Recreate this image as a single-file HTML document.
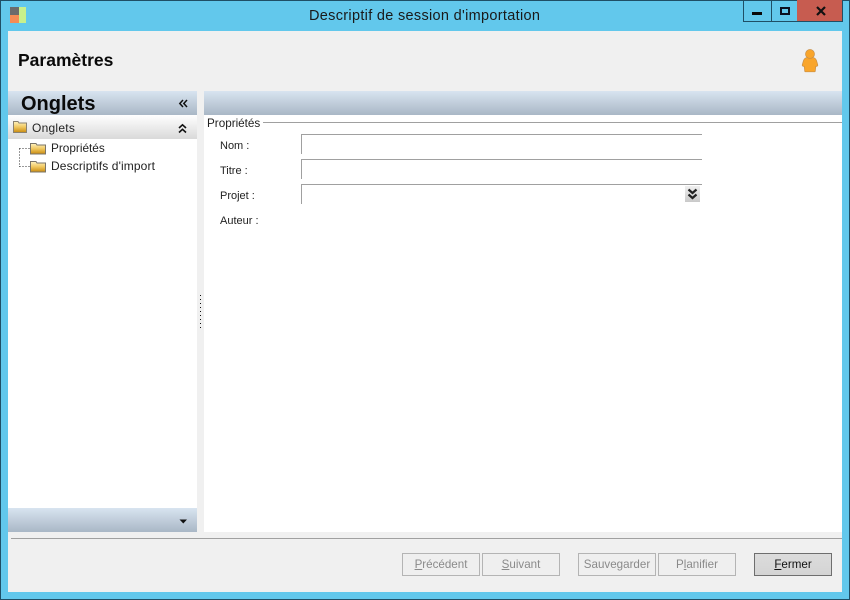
<!DOCTYPE html>
<html lang="fr"><head><meta charset="utf-8"><title>Descriptif de session d'importation</title>
<style>
html,body{margin:0;padding:0;width:850px;height:600px;overflow:hidden;background:#62c8ec}
body{position:relative;font-family:"Liberation Sans",sans-serif;color:#111}
div,svg{position:absolute}
.t{white-space:nowrap;font-size:12px;line-height:14px}
.l{font-size:11px;color:#222;left:220px}
.hd{background:linear-gradient(#d8e4f0,#a9b7c6)}
.btn{top:553px;width:76px;height:21px;border:1px solid #b4b4b4;background:#efefef;text-align:center;font-size:11.600px;line-height:22px;color:#8a8a8a}
.line{height:1px;background:#a0a0a0}
.v{width:1px;background:#a0a0a0}
</style></head><body>
<div style="left:0;top:0;width:848px;height:598px;border:1px solid #1f4f66"></div>
<div style="left:10px;top:7px;width:9px;height:8px;background:#6b6b6b"></div>
<div style="left:10px;top:15px;width:9px;height:8px;background:#f48c55"></div>
<div style="left:19px;top:7px;width:7px;height:16px;background:#c8f08c"></div>
<div class="t" style="left:309px;top:7px;font-size:14.500px;line-height:19px;color:#1a1a1a;letter-spacing:.31px">Descriptif de session d'importation</div>

<div style="left:743px;top:0;width:98px;height:21px;border:1px solid #1f4f66;border-top:0"></div>
<div style="left:771px;top:0;width:1px;height:21px;background:#1f4f66"></div>
<div style="left:797px;top:0;width:45px;height:21px;background:#c75c50;border-bottom:1px solid #1f4f66;border-right:1px solid #1f4f66"></div>
<div style="left:752px;top:12px;width:10px;height:3px;background:#0a0a0a"></div>
<div style="left:780px;top:7px;width:6px;height:4px;border:2px solid #0a1020"></div>
<svg style="left:815px;top:6px" width="12" height="10" viewBox="0 0 12 10"><path d="M2 1L10 9M10 1L2 9" stroke="#111" stroke-width="2.200" fill="none"/></svg>

<div style="left:8px;top:31px;width:834px;height:561px;background:#f0f0f0"></div>
<div class="t" style="left:18px;top:50px;font-size:17.500px;line-height:20px;font-weight:bold;color:#0a0a0a">Paramètres</div>
<svg style="left:800px;top:48px" width="20" height="26" viewBox="0 0 20 26"><path d="M3.500 12.500C4.200 10.500 6 9.500 8 9.300H12C14 9.500 15.800 10.500 16.500 12.500L17.800 17C18 18 17 18.500 15.800 18.300L15.300 23C15.300 23.500 14.800 23.800 14.300 23.800H5.700C5.200 23.800 4.700 23.500 4.700 23L4.200 18.300C3 18.500 2 18 2.200 17Z" fill="#f9a52b" stroke="#c8904a" stroke-width=".7"/><circle cx="10" cy="6" r="4.500" fill="#f9a52b" stroke="#c8904a" stroke-width=".7"/></svg>

<!-- left panel -->
<div class="hd" style="left:8px;top:91px;width:189px;height:24px"></div>
<div class="t" style="left:21px;top:93px;font-size:20px;line-height:23px;font-weight:bold;color:#0a0a0a">Onglets</div>
<svg style="left:178px;top:99px" width="11" height="9" viewBox="0 0 11 9"><path d="M5 1L1.800 4.500L5 8M9 1L5.800 4.500L9 8" stroke="#111" stroke-width="1.500" fill="none"/></svg>
<div style="left:8px;top:115px;width:189px;height:393px;background:#fff"></div>
<div style="left:8px;top:115px;width:189px;height:24px;background:linear-gradient(#fff,#d9d9d9)"></div>
<svg style="left:12px;top:120px" width="16" height="14" viewBox="0 0 16 14"><defs><linearGradient id="g" x1="0" y1="0" x2="0" y2="1"><stop offset="0" stop-color="#fff3c0"/><stop offset=".5" stop-color="#f0c860"/><stop offset="1" stop-color="#c88a10"/></linearGradient></defs><path d="M1.500 1.500H6L7 3H14.500V12.500H1.500Z" fill="url(#g)" stroke="#8a8270"/></svg>
<div class="t" style="left:32px;top:121px;color:#222;letter-spacing:.25px">Onglets</div>
<svg style="left:177px;top:123px" width="11" height="11" viewBox="0 0 11 11"><path d="M2 5L5.500 1.800L9 5M2 9.500L5.500 6.300L9 9.500" stroke="#111" stroke-width="1.600" fill="none"/></svg>

<svg style="left:18px;top:142px" width="14" height="30" viewBox="0 0 14 30" shape-rendering="crispEdges"><path d="M1.500 6.500H12" stroke="#333" stroke-dasharray="1 2" fill="none"/><path d="M1.500 6.500V25" stroke="#333" stroke-dasharray="1 2" fill="none"/><path d="M1.500 24.500H12" stroke="#333" stroke-dasharray="1 2" fill="none"/></svg>
<svg style="left:29px;top:142px" width="18" height="13" viewBox="0 0 18 13"><path d="M1.500 1.500H7L8 3H16.500V12H1.500Z" fill="url(#g)" stroke="#7a7468"/></svg>
<svg style="left:29px;top:160px" width="18" height="13" viewBox="0 0 18 13"><path d="M1.500 1.500H7L8 3H16.500V12H1.500Z" fill="url(#g)" stroke="#7a7468"/></svg>
<div class="t" style="left:51px;top:141px;color:#222;font-size:11.800px">Propriétés</div>
<div class="t" style="left:51px;top:159px;color:#222;letter-spacing:.12px">Descriptifs d'import</div>

<div class="hd" style="left:8px;top:508px;width:189px;height:24px"></div>
<svg style="left:179px;top:519px" width="9" height="5" viewBox="0 0 9 5"><path d="M0.500 0.500H8L4.300 4.500Z" fill="#111"/></svg>

<!-- splitter dots -->
<svg style="left:200px;top:294px" width="2" height="34" viewBox="0 0 2 34"><path d="M.5 0V34" stroke="#111" stroke-width="1" stroke-dasharray="1 3" stroke-dashoffset="-1"/></svg>

<!-- right panel -->
<div style="left:204px;top:115px;width:638px;height:417px;background:#fff"></div>
<div class="hd" style="left:204px;top:91px;width:638px;height:24px"></div>
<div class="line" style="left:263px;top:122px;width:579px"></div>
<div class="t" style="left:207px;top:117px;color:#222;font-size:11.700px">Propriétés</div>
<div class="t l" style="top:139px">Nom :</div>
<div class="t l" style="top:164px">Titre :</div>
<div class="t l" style="top:189px">Projet :</div>
<div class="t l" style="top:214px">Auteur :</div>

<div class="line" style="left:301px;top:134px;width:401px"></div>
<div class="v" style="left:301px;top:134px;height:20px"></div>
<div class="line" style="left:301px;top:159px;width:401px"></div>
<div class="v" style="left:301px;top:159px;height:20px"></div>
<div class="line" style="left:301px;top:184px;width:401px"></div>
<div class="v" style="left:301px;top:184px;height:20px"></div>
<div style="left:685px;top:186px;width:15px;height:16px;background:linear-gradient(#efefef,#c9c9c9)"></div>
<svg style="left:687px;top:188px" width="11" height="12" viewBox="0 0 11 12"><path d="M1.500 1.500L5.500 5L9.500 1.500M1.500 6.500L5.500 10L9.500 6.500" stroke="#222" stroke-width="2.200" fill="none"/></svg>

<!-- footer -->
<div style="left:11px;top:538px;width:831px;height:1px;background:#a0a0a0"></div>
<div class="btn" style="left:402px"><u>P</u>récédent</div>
<div class="btn" style="left:482px"><u>S</u>uivant</div>
<div class="btn" style="left:578px">Sauvegarder</div>
<div class="btn" style="left:658px">P<u>l</u>anifier</div>
<div class="btn" style="left:754px;border-color:#6e6e6e;background:linear-gradient(#dcdcdc,#d4d4d4);color:#111"><u>F</u>ermer</div>
</body></html>
